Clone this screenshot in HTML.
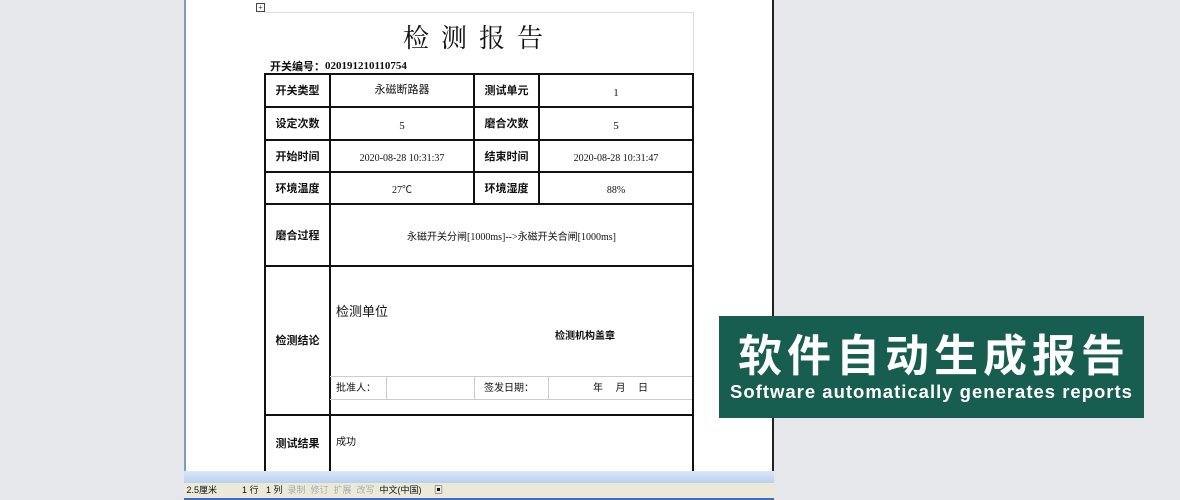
<!DOCTYPE html>
<html><head><meta charset="utf-8"><style>
*{margin:0;padding:0;box-sizing:border-box}
body{width:1180px;height:500px;background:#e6e7ea;position:relative;overflow:hidden;font-family:"Liberation Serif","Noto Sans CJK SC",serif;color:#111}
.page{position:absolute;left:184px;top:0;width:590px;height:471px;background:#fff;border-left:2px solid #7f9db9;border-right:2px solid #222}
.a{position:absolute}
.h{background:#111;height:2px}
.v{background:#111;width:2px}
.hl{background:#ccc;height:1px}
.vl{background:#ccc;width:1px}
.t{position:absolute;font-size:11px;display:flex;align-items:center;justify-content:center;height:20px;line-height:20px;white-space:nowrap;font-family:"Liberation Serif","Noto Sans CJK SC",sans-serif}
.l{justify-content:flex-start}
.b{font-weight:bold;font-family:"Noto Sans CJK SC",sans-serif}
.n{padding-top:5px}
</style></head><body>
<div class="page"></div>
<div class="a" style="left:256px;top:3px;width:9px;height:9px;border:1px solid #444;font-size:8px;line-height:7px;text-align:center">+</div>
<div class="a" style="left:264px;top:12px;width:430px;height:60px;border-top:1px solid #ddd;border-right:1px solid #ddd"></div>
<div class="a" style="left:264px;top:18px;width:430px;text-align:center;font-size:26px;letter-spacing:12px;font-family:'Noto Serif CJK SC',serif">检测报告</div>
<div class="t l" style="left:270px;top:56px;font-weight:bold;font-size:11px"><span class="b">开关编号：</span>020191210110754</div>
<div class="a h" style="left:264px;top:73px;width:430px"></div>
<div class="a h" style="left:264px;top:106px;width:430px"></div>
<div class="a h" style="left:264px;top:139px;width:430px"></div>
<div class="a h" style="left:264px;top:171px;width:430px"></div>
<div class="a h" style="left:264px;top:203px;width:430px"></div>
<div class="a h" style="left:264px;top:265px;width:430px"></div>
<div class="a h" style="left:264px;top:414px;width:430px"></div>
<div class="a v" style="left:264px;top:73px;height:398px"></div>
<div class="a v" style="left:329px;top:73px;height:398px"></div>
<div class="a v" style="left:692px;top:73px;height:398px"></div>
<div class="a v" style="left:473px;top:73px;height:131px"></div>
<div class="a v" style="left:538px;top:73px;height:131px"></div>
<div class="a hl" style="left:330px;top:376px;width:362px"></div>
<div class="a hl" style="left:330px;top:399px;width:362px"></div>
<div class="a vl" style="left:386px;top:376px;height:23px"></div>
<div class="a vl" style="left:474px;top:376px;height:23px"></div>
<div class="a vl" style="left:548px;top:376px;height:23px"></div>
<div class="t b" style="left:266px;top:80px;width:63px">开关类型</div>
<div class="t" style="left:331px;top:80px;width:142px">永磁断路器</div>
<div class="t b" style="left:475px;top:80px;width:63px">测试单元</div>
<div class="t n" style="left:540px;top:80px;width:152px">1</div>
<div class="t b" style="left:266px;top:113px;width:63px">设定次数</div>
<div class="t n" style="left:331px;top:113px;width:142px">5</div>
<div class="t b" style="left:475px;top:113px;width:63px">磨合次数</div>
<div class="t n" style="left:540px;top:113px;width:152px">5</div>
<div class="t b" style="left:266px;top:146px;width:63px">开始时间</div>
<div class="t n" style="left:331px;top:146px;width:142px;font-size:10px">2020-08-28 10:31:37</div>
<div class="t b" style="left:475px;top:146px;width:63px">结束时间</div>
<div class="t n" style="left:540px;top:146px;width:152px;font-size:10px">2020-08-28 10:31:47</div>
<div class="t b" style="left:266px;top:178px;width:63px">环境温度</div>
<div class="t n" style="left:331px;top:178px;width:142px;font-size:10px">27℃</div>
<div class="t b" style="left:475px;top:178px;width:63px">环境湿度</div>
<div class="t n" style="left:540px;top:178px;width:152px;font-size:10px">88%</div>
<div class="t b" style="left:266px;top:225px;width:63px">磨合过程</div>
<div class="t n" style="left:331px;top:225px;width:361px;font-size:10px">永磁开关分闸[1000ms]-->永磁开关合闸[1000ms]</div>
<div class="t b" style="left:266px;top:330px;width:63px">检测结论</div>
<div class="t l" style="left:336px;top:302px;font-size:13px">检测单位</div>
<div class="t b" style="left:520px;top:325px;width:130px;font-size:10px">检测机构盖章</div>
<div class="t l" style="left:336px;top:379px;font-size:10px">批准人：</div>
<div class="t l" style="left:484px;top:379px;font-size:10px">签发日期：</div>
<div class="t" style="left:549px;top:379px;width:143px;font-size:10px;word-spacing:10px">年 月 日</div>
<div class="t b" style="left:266px;top:433px;width:63px">测试结果</div>
<div class="t l" style="left:336px;top:433px;font-size:10px">成功</div>
<div class="a" style="left:184px;top:471px;width:590px;height:12px;background:linear-gradient(#dbe7f8,#b9d0f0)"></div>
<div class="a" style="left:184px;top:483px;width:590px;height:15px;background:#ece9d8;font-family:'Liberation Sans','Noto Sans CJK SC',sans-serif;font-size:9px;line-height:15px;white-space:pre;color:#111"> 2.5厘米          1 行   1 列  <span style="color:#aaa">录制  修订  扩展  改写</span>  中文(中国)     ▣</div>
<div class="a" style="left:184px;top:498px;width:590px;height:2px;background:#3a6ec8"></div>
<div class="a" style="left:719px;top:316px;width:425px;height:102px;background:#175e50;color:#fff;font-family:'Noto Sans CJK SC',sans-serif;text-align:center">
<div style="font-size:44px;font-weight:bold;line-height:44px;margin-top:14px;letter-spacing:5px;padding-left:5px">软件自动生成报告</div>
<div style="font-size:18.5px;font-weight:bold;line-height:20px;margin-top:8px;white-space:nowrap;font-family:'Liberation Sans','Noto Sans CJK SC',sans-serif;letter-spacing:1px">Software automatically generates reports</div>
</div>
</body></html>
